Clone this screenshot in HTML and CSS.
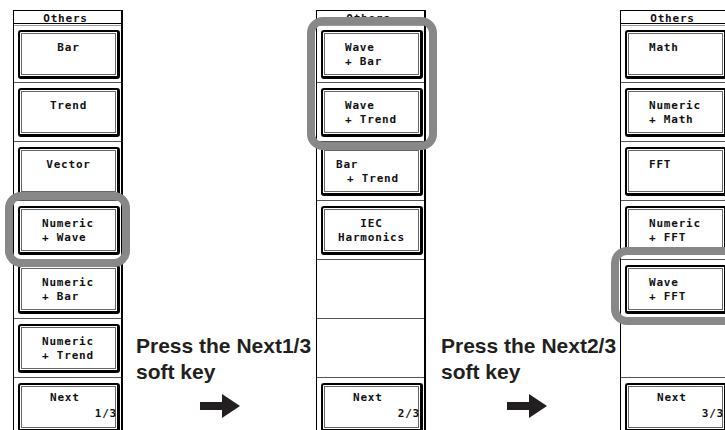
FILE: index.html
```html
<!DOCTYPE html>
<html lang="en">
<head>
<meta charset="utf-8">
<title>Others menu</title>
<link rel="stylesheet" href="styles.css">
</head>
<body>
<div class="page">
  <section class="panel">
    <div class="head"><span>Others</span></div>
    <div class="rule"></div>
    <div class="slot first"><div class="btn"><div class="lbl c">Bar</div></div></div>
    <div class="slot"><div class="btn"><div class="lbl c">Trend</div></div></div>
    <div class="slot"><div class="btn"><div class="lbl c">Vector</div></div></div>
    <div class="slot"><div class="btn"><div class="lbl">Numeric<br>+ Wave</div></div></div>
    <div class="slot"><div class="btn"><div class="lbl">Numeric<br>+ Bar</div></div></div>
    <div class="slot"><div class="btn"><div class="lbl">Numeric<br>+ Trend</div></div></div>
    <div class="slot last"><div class="btn"><div class="nx">Next</div><div class="pg">1/3</div></div></div>
    <div class="hl hl1"></div>
  </section>

  <div class="step">
    <p>Press the Next1/3<br>soft key</p>
    <svg class="arrow" width="40" height="24" viewBox="0 0 40 24"><rect x="0" y="8" width="23" height="8" fill="#231f20"/><polygon points="22,0 40,12 22,24" fill="#231f20"/></svg>
  </div>

  <section class="panel">
    <div class="head"><span>Others</span></div>
    <div class="rule"></div>
    <div class="slot first"><div class="btn"><div class="lbl">Wave<br>+ Bar</div></div></div>
    <div class="slot"><div class="btn"><div class="lbl">Wave<br>+ Trend</div></div></div>
    <div class="slot"><div class="btn"><div class="lbl bt"><div class="l1">Bar</div><div class="l2">+ Trend</div></div></div></div>
    <div class="slot"><div class="btn"><div class="lbl c">IEC<br>Harmonics</div></div></div>
    <div class="slot"></div>
    <div class="slot"></div>
    <div class="slot last"><div class="btn"><div class="nx">Next</div><div class="pg">2/3</div></div></div>
    <div class="hl hl2"></div>
  </section>

  <div class="step s2">
    <p>Press the Next2/3<br>soft key</p>
    <svg class="arrow" width="40" height="24" viewBox="0 0 40 24"><rect x="0" y="8" width="23" height="8" fill="#231f20"/><polygon points="22,0 40,12 22,24" fill="#231f20"/></svg>
  </div>

  <section class="panel">
    <div class="head"><span>Others</span></div>
    <div class="rule"></div>
    <div class="slot first"><div class="btn"><div class="lbl">Math</div></div></div>
    <div class="slot"><div class="btn"><div class="lbl">Numeric<br>+ Math</div></div></div>
    <div class="slot"><div class="btn"><div class="lbl">FFT</div></div></div>
    <div class="slot"><div class="btn"><div class="lbl">Numeric<br>+ FFT</div></div></div>
    <div class="slot"><div class="btn"><div class="lbl">Wave<br>+ FFT</div></div></div>
    <div class="slot"></div>
    <div class="slot last"><div class="btn"><div class="nx">Next</div><div class="pg">3/3</div></div></div>
    <div class="hl hl3"></div>
  </section>
</div>
</body>
</html>
```

FILE: styles.css
```css
* { box-sizing: border-box; }

html, body {
  margin: 0;
  padding: 0;
  background: #fff;
  overflow: hidden;
}

body {
  width: 725px;
  height: 430px;
}

.page {
  display: flex;
  align-items: flex-start;
  width: 760px;
  padding: 10px 0 0 13px;
}

.panel {
  flex: none;
  position: relative;
  width: 110px;
  height: 440px;
  border-style: solid;
  border-color: #000;
  border-width: 1px 2px 0 1px;
  background: #fff;
  color: #111;
  font: bold 11px/14px "DejaVu Sans Mono", monospace;
  letter-spacing: 0.8px;
}

.head {
  height: 13px;
  border-bottom: 1px solid #000;
  text-align: center;
}

.head span {
  display: block;
  line-height: 11px;
  padding-top: 2px;
  margin-left: -4px;
}

.rule {
  height: 1px;
  margin-top: 1px;
  background: #9a9a9a;
}

.slot {
  height: 59px;
  padding: 5px 0 4px;
  border-bottom: 1px solid #555;
}

.slot.first {
  height: 57px;
  padding-top: 4px;
  padding-bottom: 3px;
}

.slot.last {
  border-bottom: none;
}

.btn {
  margin-left: 4px;
  width: 102px;
  height: 49px;
  border: 2px solid #000;
  border-right-width: 3px;
  border-bottom-width: 3px;
  border-radius: 3px;
  box-shadow: inset 0 0 0 1px #fff, inset 0 0 0 2px #666;
}

.lbl {
  padding: 9px 0 0 22px;
  white-space: pre;
}

.lbl.c {
  padding-left: 0;
  text-align: center;
}

.lbl.bt {
  padding-left: 13px;
}

.lbl.bt .l2 {
  margin-left: 11px;
}

.nx {
  padding: 5px 0 0 30px;
  line-height: 16px;
}

.pg {
  line-height: 16px;
  text-align: right;
  margin-right: 0;
}

.hl {
  position: absolute;
  border: 8px solid #888;
  border-radius: 16px;
}

.hl1 { left: -9px;  top: 181px; width: 125px; height: 75px; }
.hl2 { left: -10px; top: 6px;   width: 130px; height: 133px; }
.hl3 { left: -10px; top: 236px; width: 130px; height: 78px; }

.step {
  flex: none;
  width: 193px;
  padding: 323px 0 0 13px;
  color: #231f20;
  font: bold 21px/26px "Liberation Sans", Arial, sans-serif;
}

.step p {
  margin: 0;
}

.arrow {
  display: block;
  margin: 9px 0 0 64px;
}

.step.s2 {
  width: 194px;
  padding-left: 15px;
}

.step.s2 .arrow {
  margin-left: 66px;
}
```
